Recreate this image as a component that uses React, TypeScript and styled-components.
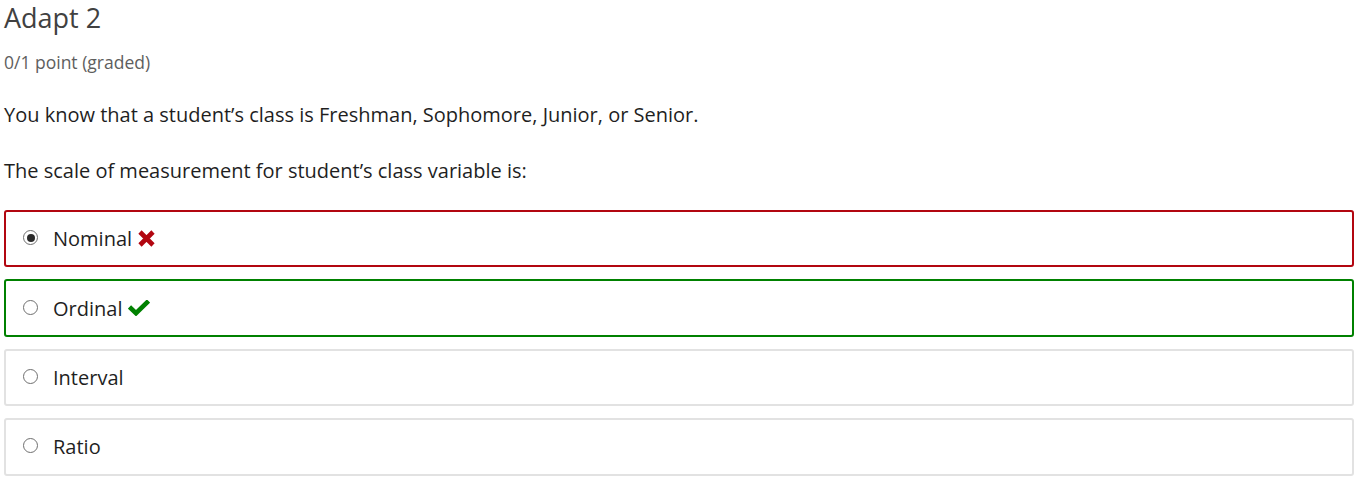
import React from "react";
import styled, { createGlobalStyle } from "styled-components";

const Global = createGlobalStyle`
  body {
    margin: 0;
    background: #fff;
    font-family: "Open Sans", "Liberation Sans", sans-serif;
    color: #313131;
  }
`;

const Page = styled.div`
  padding: 0 10px 0 4px;
`;

const Title = styled.h3`
  margin: 0;
  padding-top: 2px;
  font-size: 27px;
  font-weight: 400;
  line-height: 32px;
  color: #414141;
`;

const Points = styled.div`
  margin-top: 16px;
  font-size: 17.5px;
  line-height: 24px;
  color: #5e5e5e;
`;

const Para = styled.p<{ $top: number }>`
  margin: 0;
  margin-top: ${(p) => p.$top}px;
  font-size: 20px;
  line-height: 28px;
  color: #1f1f1f;
`;

const Options = styled.div`
  margin-top: 25px;
  display: flex;
  flex-direction: column;
  gap: 12px;
`;

type State = "wrong" | "right" | "none";

const borderFor = (s: State) =>
  s === "wrong" ? "#b20610" : s === "right" ? "#008100" : "#e2e2e2";

const Option = styled.label<{ $state: State }>`
  box-sizing: border-box;
  display: flex;
  align-items: center;
  height: 57.4px;
  padding-left: 16px;
  border: 2px solid ${(p) => borderFor(p.$state)};
  border-radius: 3px;
  font-size: 20px;
  color: #1f1f1f;
`;

const Radio = styled.span<{ $checked: boolean }>`
  box-sizing: border-box;
  flex: none;
  width: 15px;
  height: 15px;
  margin-top: -2px;
  margin-left: 1px;
  border-radius: 50%;
  border: 1.5px solid #6f6f6f;
  margin-right: 15px;
  display: flex;
  align-items: center;
  justify-content: center;
  &::after {
    content: "";
    display: ${(p) => (p.$checked ? "block" : "none")};
    width: 8px;
    height: 8px;
    border-radius: 50%;
    background: #2b2b2b;
  }
`;

const Mark = styled.svg`
  margin-left: 6px;
  margin-top: -1px;
`;

const Cross = () => (
  <Mark width="17" height="17" viewBox="0 0 17 17">
    <path d="M2 2 L15 15 M15 2 L2 15" stroke="#b20610" strokeWidth="4.6" />
  </Mark>
);

const Check = () => (
  <Mark width="22" height="16" viewBox="0 0 22 16">
    <path
      d="M1.5 7 L8 13.2 L20.5 1"
      stroke="#008100"
      strokeWidth="4.6"
      strokeLinejoin="miter"
      fill="none"
    />
  </Mark>
);

const options: { label: string; state: State; checked: boolean }[] = [
  { label: "Nominal", state: "wrong", checked: true },
  { label: "Ordinal", state: "right", checked: false },
  { label: "Interval", state: "none", checked: false },
  { label: "Ratio", state: "none", checked: false },
];

export default function App() {
  return (
    <Page>
      <Global />
      <Title>Adapt 2</Title>
      <Points>0/1 point (graded)</Points>
      <Para $top={27}>
        You know that a student’s class is Freshman, Sophomore, Junior, or Senior.
      </Para>
      <Para $top={28}>The scale of measurement for student’s class variable is:</Para>
      <Options>
        {options.map((o) => (
          <Option key={o.label} $state={o.state}>
            <Radio $checked={o.checked} />
            {o.label}
            {o.state === "wrong" && <Cross />}
            {o.state === "right" && <Check />}
          </Option>
        ))}
      </Options>
    </Page>
  );
}
